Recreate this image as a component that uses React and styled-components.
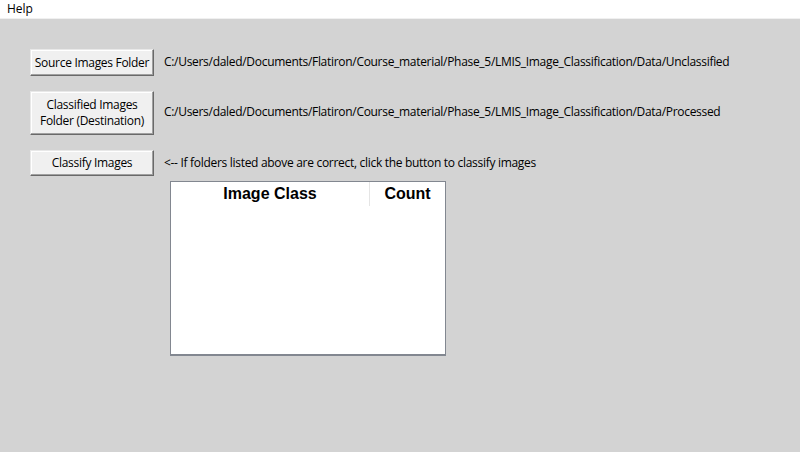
import React from "react";
import styled, { createGlobalStyle } from "styled-components";

const Global = createGlobalStyle`
    html, body {
        margin: 0;
        padding: 0;
        background: #d3d3d3;
        font-family: "Open Sans", "Noto Sans", sans-serif;
    }
`;

const Window = styled.div`
    width: 800px;
    height: 452px;
    background: #d3d3d3;
    overflow: hidden;
`;

const MenuBar = styled.div`
    height: 18px;
    background: #ffffff;
    border-bottom: 1px solid #f0f0f0;
    display: flex;
    align-items: center;
    padding-left: 7px;
`;

const MenuItem = styled.span`
    font-size: 12px;
    color: #000;
    line-height: 18px;
`;

const Body = styled.div`
    padding: 30px 0 0 30px;
`;

const Controls = styled.div`
    display: grid;
    grid-template-columns: 124px auto;
    column-gap: 10px;
    row-gap: 15px;
`;

const Button = styled.button`
    height: ${p => p.h}px;
    width: 124px;
    margin: 0;
    padding: 0;
    background: #f0f0f0;
    border: 1px solid;
    border-color: #e8e8e8 #696969 #696969 #e8e8e8;
    box-shadow: inset -1px -1px 0 #a0a0a0, inset 1px 1px 0 #ffffff;
    font-family: "Open Sans", "Noto Sans", sans-serif;
    font-size: 12px;
    letter-spacing: -0.3px;
    line-height: 16px;
    white-space: nowrap;
    color: #000;
    text-align: center;
`;

const PathText = styled.span`
    align-self: center;
    padding-bottom: ${p => p.lift || 2}px;
    font-size: 12px;
    letter-spacing: -0.3px;
    color: #000;
    white-space: nowrap;
`;

const Table = styled.div`
    margin: 5px 0 0 140px;
    width: 274px;
    height: 172px;
    background: #ffffff;
    border: 1px solid #828790;
    border-bottom-width: 2px;
    display: flex;
    flex-direction: column;
`;

const HeaderRow = styled.div`
    display: grid;
    grid-template-columns: 199px 1fr;
    height: 24px;
`;

const HeaderCell = styled.div`
    font-family: "Liberation Sans", Arial, sans-serif;
    font-weight: bold;
    font-size: 16px;
    line-height: 24px;
    text-align: center;
    color: #000;
    border-right: ${p => (p.divider ? "1px solid #e5e5e5" : "none")};
`;

export default function App() {
    return (
        <Window>
            <Global />
            <MenuBar>
                <MenuItem>Help</MenuItem>
            </MenuBar>
            <Body>
                <Controls>
                    <Button h={27}>Source Images Folder</Button>
                    <PathText>
                        C:/Users/daled/Documents/Flatiron/Course_material/Phase_5/LMIS_Image_Classification/Data/Unclassified
                    </PathText>
                    <Button h={44}>
                        Classified Images
                        <br />
                        Folder (Destination)
                    </Button>
                    <PathText lift={4}>
                        C:/Users/daled/Documents/Flatiron/Course_material/Phase_5/LMIS_Image_Classification/Data/Processed
                    </PathText>
                    <Button h={26}>Classify Images</Button>
                    <PathText>
                        &lt;-- If folders listed above are correct, click the button to classify images
                    </PathText>
                </Controls>
                <Table>
                    <HeaderRow>
                        <HeaderCell divider>Image Class</HeaderCell>
                        <HeaderCell>Count</HeaderCell>
                    </HeaderRow>
                </Table>
            </Body>
        </Window>
    );
}
